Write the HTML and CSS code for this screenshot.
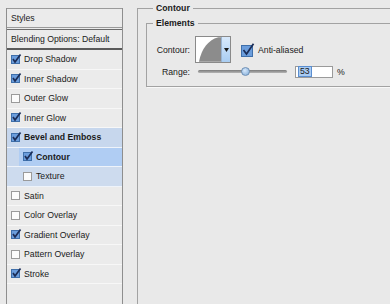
FILE: index.html
```html
<!DOCTYPE html>
<html lang="en">
<head>
    <meta charset="UTF-8">
    <title>Layer Style - Contour</title>
    <link rel="stylesheet" href="styles.css">
</head>
<body>
<div class="page">
    <div class="styles">
        <div class="title">Styles</div>
        <div class="blend">Blending Options: Default</div>
        <ul class="fx">
            <li><svg class="cb" viewBox="0 0 11 11"><rect class="on" x="0.5" y="1.5" width="8" height="8"/><path class="tick" d="M2 5 L4 8 L9.5 0.5"/></svg>Drop Shadow</li>
            <li><svg class="cb" viewBox="0 0 11 11"><rect class="on" x="0.5" y="1.5" width="8" height="8"/><path class="tick" d="M2 5 L4 8 L9.5 0.5"/></svg>Inner Shadow</li>
            <li><svg class="cb" viewBox="0 0 11 11"><rect class="off" x="0.5" y="1.5" width="8" height="8"/></svg>Outer Glow</li>
            <li><svg class="cb" viewBox="0 0 11 11"><rect class="on" x="0.5" y="1.5" width="8" height="8"/><path class="tick" d="M2 5 L4 8 L9.5 0.5"/></svg>Inner Glow</li>
            <li class="parent"><svg class="cb" viewBox="0 0 11 11"><rect class="on" x="0.5" y="1.5" width="8" height="8"/><path class="tick" d="M2 5 L4 8 L9.5 0.5"/></svg>Bevel and Emboss</li>
            <li class="parent sub"><span class="current"><svg class="cb" viewBox="0 0 11 11"><rect class="on" x="0.5" y="1.5" width="8" height="8"/><path class="tick" d="M2 5 L4 8 L9.5 0.5"/></svg>Contour</span></li>
            <li class="parent sub plain"><span><svg class="cb" viewBox="0 0 11 11"><rect class="off" x="0.5" y="1.5" width="8" height="8"/></svg>Texture</span></li>
            <li><svg class="cb" viewBox="0 0 11 11"><rect class="off" x="0.5" y="1.5" width="8" height="8"/></svg>Satin</li>
            <li><svg class="cb" viewBox="0 0 11 11"><rect class="off" x="0.5" y="1.5" width="8" height="8"/></svg>Color Overlay</li>
            <li><svg class="cb" viewBox="0 0 11 11"><rect class="on" x="0.5" y="1.5" width="8" height="8"/><path class="tick" d="M2 5 L4 8 L9.5 0.5"/></svg>Gradient Overlay</li>
            <li><svg class="cb" viewBox="0 0 11 11"><rect class="off" x="0.5" y="1.5" width="8" height="8"/></svg>Pattern Overlay</li>
            <li><svg class="cb" viewBox="0 0 11 11"><rect class="on" x="0.5" y="1.5" width="8" height="8"/><path class="tick" d="M2 5 L4 8 L9.5 0.5"/></svg>Stroke</li>
        </ul>
    </div>

    <fieldset class="group">
        <legend>Contour</legend>
        <fieldset class="group inner">
            <legend>Elements</legend>
            <div class="field">
                <span class="lbl">Contour:</span>
                <div class="thumb">
                    <svg class="curve" viewBox="0 0 26 25"><path d="M3 25 C6 12 12 3 23 0 L26 0 L26 25 Z"/></svg>
                    <span class="drop"><svg viewBox="0 0 5 4"><path d="M0 0 H5 L2.5 4 Z"/></svg></span>
                </div>
                <label class="aa"><svg class="cb big" viewBox="0 0 14 14"><rect class="on" x="0.5" y="2.5" width="11" height="11"/><path class="tick" d="M2.5 7 L5.5 11 L12.5 0.8"/></svg>Anti-aliased</label>
            </div>
            <div class="field">
                <span class="lbl">Range:</span>
                <div class="slider"><span class="knob"></span></div>
                <span class="num"><span class="sel">53</span></span>
                <span class="pct">%</span>
            </div>
        </fieldset>
    </fieldset>
</div>
</body>
</html>
```

FILE: styles.css
```css
body {margin: 0; padding: 0; background: #e9e9e9; overflow: hidden;
    font-family: "Liberation Sans", Arial, sans-serif; font-size: 8.7px; color: #1a1a1a;}
.page {display: flex; align-items: flex-start; height: 304px; overflow: hidden;}

/* left list */
.styles {flex: none; margin: 8px 0 0 6px; width: 117px; height: 300px; box-sizing: border-box;
    border-left: 1px solid #8e8e8e; border-right: 1px solid #8e8e8e; background: #ebebeb;}
.title {height: 20px; line-height: 18px; box-sizing: border-box; padding-left: 4px;
    border-top: 1px solid #9a9a9a; border-bottom: 1px solid #9a9a9a;}
.blend {margin-top: 1px; height: 21px; line-height: 18px; box-sizing: border-box; padding-left: 4px;
    white-space: nowrap; border-top: 1px solid #6c6c6c; border-bottom: 2px solid #5a5a5a;}
.fx {margin: 0; padding: 0; list-style: none;}
.fx li {display: flex; align-items: center; height: 19.5px; box-sizing: border-box;
    padding-left: 4px; border-bottom: 1px solid #f7f7f7;}
.fx li span {display: flex; align-items: center; align-self: stretch; flex: 1;}
.cb {width: 11px; height: 11px; margin-right: 2px; flex: none;}
.cb .on {fill: #6b9ddc; stroke: #3f6faa; stroke-width: 1;}
.cb .off {fill: #fbfbfb; stroke: #9a9a9a; stroke-width: 1;}
.cb .tick {fill: none; stroke: #1b2d57; stroke-width: 1.7;}
.fx .parent {background: #c7d7ed; font-weight: bold; border-bottom-color: #eef3fa;}
.fx .sub {padding-left: 12px;}
.fx .current {background: #b0cdf3; padding-left: 4px;}
.fx .plain {font-weight: normal; background: #cddbee;}
.fx .plain span {padding-left: 4px;}

/* right side */
.group {flex: none; margin: 3px 0 0 14px; padding: 0 0 0 8px; width: 290px; min-height: 320px;
    border: 1px solid #a2a2a2; box-shadow: 1px 1px 0 #f8f8f8;}
.group legend {font-weight: bold; line-height: 10px; padding: 0 3px; margin-left: 7px;}
.inner {margin: 5px 0 0 0; padding: 8px 0 8px 0; min-height: 0; width: 260px;}
.inner legend {margin-left: 6px;}

.field {display: flex; align-items: center;}
.field + .field {margin-top: 2px; height: 13px;}
.lbl {width: 43px; text-align: right; flex: none;}
.thumb {margin-left: 5px; width: 36px; height: 27px; box-sizing: border-box; display: flex;
    border: 1px solid #8a8a8a; background: #fff;}
.curve {width: 26px; height: 25px; fill: #8c8c8c;}
.drop {width: 8px; display: flex; align-items: center; justify-content: center;
    background: linear-gradient(#d8e9fb, #a9cdf2); border-left: 1px solid #9ab4d2;}
.drop svg {width: 5px; height: 4px; fill: #1a1a1a;}
.aa {display: flex; align-items: center; margin-left: 10px;}
.cb.big {width: 14px; height: 14px; margin-right: 3px;}

.slider {position: relative; margin-left: 8px; width: 89px; height: 3px; border-radius: 2px;
    background: linear-gradient(#7a7a7a, #b5b5b5);}
.knob {position: absolute; left: 43px; top: -3px; width: 9px; height: 9px; border-radius: 50%;
    box-sizing: border-box; border: 1px solid #6d8fb5; background: radial-gradient(circle at 40% 35%, #d6e8fb, #7ea9d6);}
.num {margin-left: 8px; width: 38px; height: 12px; box-sizing: border-box; padding-left: 2px;
    border: 1px solid #9a9a9a; background: #fff; display: flex; align-items: center;}
.sel {background: #a9cbf2; padding: 0 1px; line-height: 9px; border: 1px solid #5b8ed0;}
.pct {margin-left: 4px;}
```
